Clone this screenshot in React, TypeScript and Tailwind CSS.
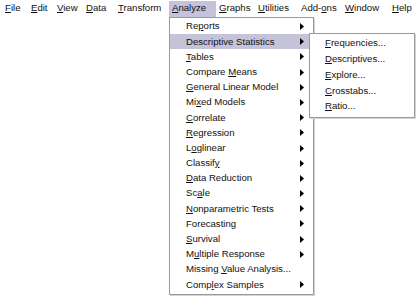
import React from 'react';

type Item = { pre: string; key?: string; post?: string; sub?: boolean; active?: boolean; w?: string };

const bar: Item[] = [
    { pre: '', key: 'F', post: 'ile', w: 'w-[26px]' },
    { pre: '', key: 'E', post: 'dit', w: 'w-[26px]' },
    { pre: '', key: 'V', post: 'iew', w: 'w-[29px]' },
    { pre: '', key: 'D', post: 'ata', w: 'w-[32px]' },
    { pre: '', key: 'T', post: 'ransform', w: 'w-[54px]' },
    { pre: '', key: 'A', post: 'nalyze', active: true, w: 'w-[47px]' },
    { pre: '', key: 'G', post: 'raphs', w: 'w-[39px]' },
    { pre: '', key: 'U', post: 'tilities', w: 'w-[43px]' },
    { pre: 'Add-', key: 'o', post: 'ns', w: 'w-[44px]' },
    { pre: '', key: 'W', post: 'indow', w: 'w-[47px]' },
    { pre: '', key: 'H', post: 'elp', w: 'w-[26px]' },
];

const menu: Item[] = [
    { pre: 'Re', key: 'p', post: 'orts', sub: true },
    { pre: 'Descriptive Statistics', sub: true, active: true },
    { pre: '', key: 'T', post: 'ables', sub: true },
    { pre: 'Compare ', key: 'M', post: 'eans', sub: true },
    { pre: '', key: 'G', post: 'eneral Linear Model', sub: true },
    { pre: 'Mi', key: 'x', post: 'ed Models', sub: true },
    { pre: '', key: 'C', post: 'orrelate', sub: true },
    { pre: '', key: 'R', post: 'egression', sub: true },
    { pre: 'L', key: 'o', post: 'glinear', sub: true },
    { pre: 'Classif', key: 'y', sub: true },
    { pre: '', key: 'D', post: 'ata Reduction', sub: true },
    { pre: 'Sc', key: 'a', post: 'le', sub: true },
    { pre: '', key: 'N', post: 'onparametric Tests', sub: true },
    { pre: 'Forecasting', sub: true },
    { pre: '', key: 'S', post: 'urvival', sub: true },
    { pre: 'M', key: 'u', post: 'ltiple Response', sub: true },
    { pre: 'Missing ', key: 'V', post: 'alue Analysis...' },
    { pre: 'Comp', key: 'l', post: 'ex Samples', sub: true },
];

const submenu: Item[] = [
    { pre: '', key: 'F', post: 'requencies...' },
    { pre: '', key: 'D', post: 'escriptives...' },
    { pre: '', key: 'E', post: 'xplore...' },
    { pre: '', key: 'C', post: 'rosstabs...' },
    { pre: '', key: 'R', post: 'atio...' },
];

function Label({ item }: { item: Item }) {
    return (
        <span className="whitespace-nowrap">
            {item.pre}
            {item.key && <span className="underline underline-offset-[1px]">{item.key}</span>}
            {item.post}
        </span>
    );
}

function Arrow() {
    return (
        <svg width="4" height="7" viewBox="0 0 4 7" className="absolute right-[9px] top-[4px]">
            <path d="M0 0 L4 3.5 L0 7 Z" fill="#000" />
        </svg>
    );
}

export default function App() {
    return (
        <div
            className="relative w-[417px] h-[296px] bg-white overflow-hidden text-[9.6px] text-[#111]"
            style={{ fontFamily: '"Liberation Sans", Arial, sans-serif' }}
        >
            {/* menu bar */}
            <div className="flex h-[17px] items-center pl-[2px]">
                {bar.map((b, i) => (
                    <div
                        key={i}
                        className={
                            'h-[16px] flex items-center pl-[3px] shrink-0 ' +
                            b.w + ' ' +
                            (b.active ? 'bg-[#c5c3d9]' : '')
                        }
                    >
                        <Label item={b} />
                    </div>
                ))}
            </div>

            {/* Analyze dropdown */}
            <div className="absolute left-[169px] top-[17px] w-[145px] border border-[#9a9a9a] bg-white pt-[1px] pb-[2px] shadow-[1px_1px_0_#d4d4d4]">
                {menu.map((m, i) => (
                    <div
                        key={i}
                        className={
                            'relative h-[15.2px] flex items-center pl-[16px] ' +
                            (m.active ? 'bg-[#c5c3d9]' : '')
                        }
                    >
                        <Label item={m} />
                        {m.sub && <Arrow />}
                    </div>
                ))}
            </div>

            {/* Descriptive Statistics submenu */}
            <div className="absolute left-[309px] top-[33px] w-[106px] border border-[#9a9a9a] bg-white pt-[1.5px] pb-[3px] shadow-[1px_1px_0_#d4d4d4]">
                {submenu.map((s, i) => (
                    <div key={i} className="h-[15.8px] flex items-center pl-[15px]">
                        <Label item={s} />
                    </div>
                ))}
            </div>
        </div>
    );
}
